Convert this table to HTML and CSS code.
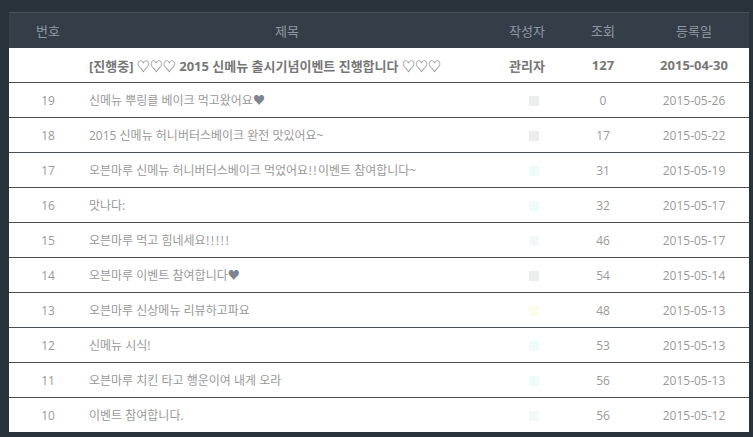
FILE: index.html
```html
<!DOCTYPE html>
<html lang="ko">
<head>
<meta charset="utf-8">
<link rel="stylesheet" href="styles.css">
</head>
<body>
<div class="wrap">
<table class="board">
  <colgroup>
    <col class="c-num"><col class="c-title"><col class="c-writer"><col class="c-views"><col class="c-date">
  </colgroup>
  <thead>
    <tr><th>번호</th><th>제목</th><th>작성자</th><th>조회</th><th>등록일</th></tr>
  </thead>
  <tbody>
    <tr class="notice"><td></td><td class="title">[진행중] ♡♡♡ 2015 신메뉴 출시기념이벤트 진행합니다 ♡♡♡</td><td>관리자</td><td>127</td><td>2015-04-30</td></tr>
    <tr><td>19</td><td class="title">신메뉴 뿌링클 베이크 먹고왔어요<span class="heart">♥</span></td><td><span class="pic grey"></span></td><td>0</td><td>2015-05-26</td></tr>
    <tr><td>18</td><td class="title">2015 신메뉴 허니버터스베이크 완전 맛있어요~</td><td><span class="pic grey"></span></td><td>17</td><td>2015-05-22</td></tr>
    <tr><td>17</td><td class="title">오븐마루 신메뉴 허니버터스베이크 먹었어요<span class="ko">!!</span>이벤트 참여합니다~</td><td><span class="pic cyan"></span></td><td>31</td><td>2015-05-19</td></tr>
    <tr><td>16</td><td class="title">맛나다:</td><td><span class="pic cyan"></span></td><td>32</td><td>2015-05-17</td></tr>
    <tr><td>15</td><td class="title">오븐마루 먹고 힘네세요<span class="ko">!!!!!</span></td><td><span class="pic faint"></span></td><td>46</td><td>2015-05-17</td></tr>
    <tr><td>14</td><td class="title">오븐마루 이벤트 참여합니다<span class="heart">♥</span></td><td><span class="pic grey"></span></td><td>54</td><td>2015-05-14</td></tr>
    <tr><td>13</td><td class="title">오븐마루 신상메뉴 리뷰하고파요</td><td><span class="pic yellow"></span></td><td>48</td><td>2015-05-13</td></tr>
    <tr><td>12</td><td class="title">신메뉴 시식!</td><td><span class="pic cyan"></span></td><td>53</td><td>2015-05-13</td></tr>
    <tr><td>11</td><td class="title">오븐마루 치킨 타고 행운이여 내게 오라</td><td><span class="pic cyan"></span></td><td>56</td><td>2015-05-13</td></tr>
    <tr><td>10</td><td class="title">이벤트 참여합니다.</td><td><span class="pic faint"></span></td><td>56</td><td>2015-05-12</td></tr>
  </tbody>
</table>
</div>
</body>
</html>
```
FILE: styles.css
```css
html, body {
  margin: 0;
  padding: 0;
  background: #29333c;
}
.wrap {
  padding: 12px 4px 0 9px;
}
.board {
  width: 740px;
  border-collapse: collapse;
  table-layout: fixed;
  font-family: "Open Sans", "Noto Sans CJK KR", sans-serif;
  font-size: 12px;
  color: #999999;
}
.c-num { width: 78px; }
.c-title { width: 400px; }
.c-writer { width: 80px; }
.c-views { width: 72px; }
.c-date { width: 110px; }
.board thead tr {
  background: #333e48;
  border-top: 1px solid #46515b;
}
.board th {
  height: 35px;
  padding: 0;
  font-weight: normal;
  font-size: 13px;
  color: #8f99a4;
  text-align: center;
}
.board tbody tr {
  background: #fff;
  border-bottom: 1px solid #4a4f55;
}
.board tbody tr:last-child {
  border-bottom: none;
}
.board td {
  height: 34px;
  padding: 0;
  text-align: center;
  white-space: nowrap;
}
.board td.title {
  text-align: left;
  padding-left: 2px;
}
.ko {
  font-family: "Noto Sans CJK KR", sans-serif;
  letter-spacing: 1px;
}
.heart {
  color: #7d8590;
}
.notice td {
  font-weight: bold;
  color: #777777;
  font-size: 13px;
}
.pic {
  display: inline-block;
  width: 10px;
  height: 10px;
  vertical-align: middle;
  margin-left: 13px;
}
.pic.grey { background: #eceeee; }
.pic.cyan { background: #effafa; }
.pic.yellow { background: #fbfbee; }
.pic.faint { background: #f4f8f8; }
```
